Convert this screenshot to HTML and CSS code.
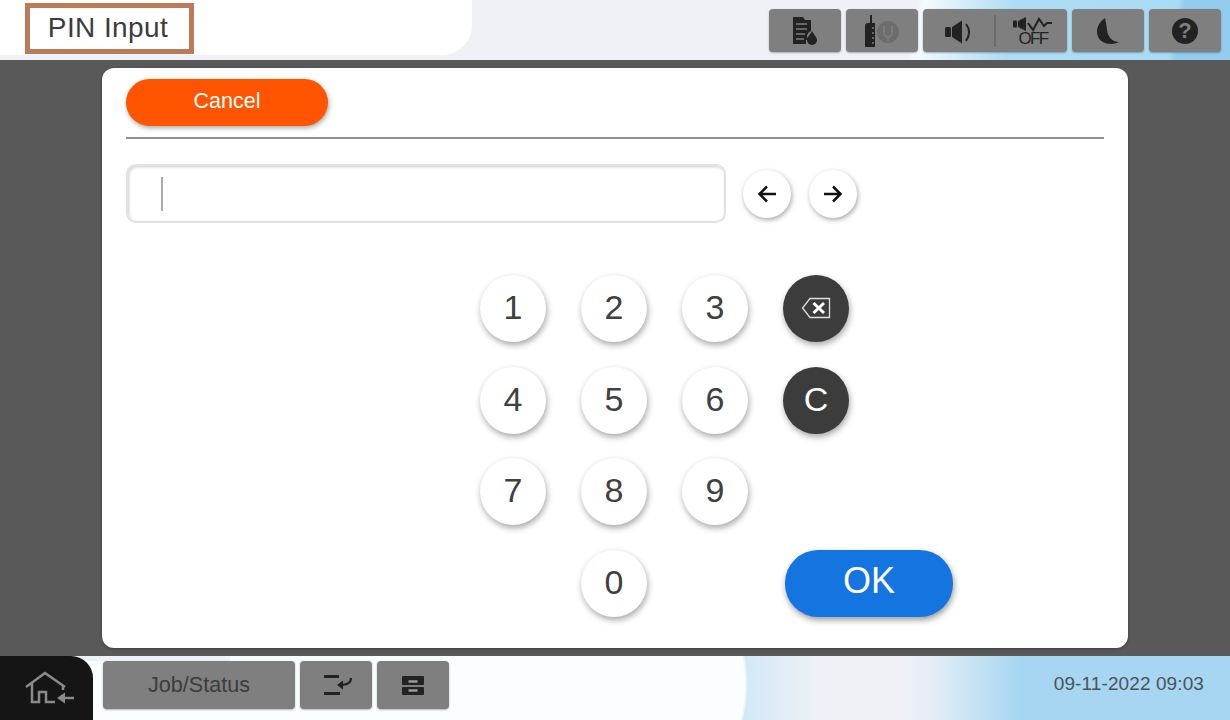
FILE: index.html
```html
<!DOCTYPE html>
<html lang="en">

<head>
    <meta charset="UTF-8">
    <meta name="viewport" content="width=device-width, initial-scale=1.0">
    <title>PIN Input</title>
    <link rel="stylesheet" href="styles.css">
</head>

<body>
    <header class="topbar">
        <div class="title-area">
            <h1 class="title">PIN Input</h1>
        </div>
        <div class="top-btns">
            <div class="tool">
                <svg width="26" height="30" viewBox="0 0 26 30">
                    <path d="M1 1h10l2 3h6v11a6 6 0 0 0-3 9h-2v4H1z" fill="#222" />
                    <path d="M4 8h11M4 13h11M4 18h9M4 23h8" stroke="#7f7f7f" stroke-width="1.6" />
                    <path d="M20 15c2 4 5 6 5 9a5 5 0 0 1-10 0c0-3 3-5 5-9z" fill="#222" />
                </svg>
            </div>
            <div class="tool">
                <svg width="36" height="34" viewBox="0 0 36 34">
                    <circle cx="24" cy="18" r="11" fill="#6d6d6d" />
                    <path d="M20 12v7a4 4 0 0 0 8 0v-7M24 23v4" fill="none" stroke="#7c7c7c" stroke-width="2" />
                    <path d="M6 1h2v8h3v24H1V12a3 3 0 0 1 3-3h2z" fill="#222" />
                    <path d="M8 14h2M8 19h2M8 24h2M8 29h2" stroke="#7f7f7f" stroke-width="1.4" />
                </svg>
            </div>
            <div class="tool tool-wide">
                <div class="tool-half">
                    <svg width="30" height="26" viewBox="0 0 30 26">
                        <rect x="1" y="9" width="6" height="10" rx="1.500" fill="#222" />
                        <path d="M8 9l10-6.500v23L8 19z" fill="#222" />
                        <path d="M22 6c4 5 4 11 0 17" fill="none" stroke="#222" stroke-width="2" />
                    </svg>
                </div>
                <span class="tool-sep"></span>
                <div class="tool-half mute">
                    <svg width="42" height="16" viewBox="0 0 42 16">
                        <rect x="2" y="4.500" width="4" height="7" rx="1" fill="#222" />
                        <path d="M7 5l8-4v14l-8-4z" fill="#222" />
                        <path d="M17 7l5 7 6-11 5 7 3-3h5" fill="none" stroke="#222" stroke-width="2" />
                    </svg>
                    <span class="off-text">OFF</span>
                </div>
            </div>
            <div class="tool">
                <svg width="24" height="28" viewBox="0 0 24 28">
                    <path d="M9 1C2 6 0 12 1.500 18 3 24 9 27 15 27c3 0 6-1 8-2-6 0-10-4-11.500-9.500C10.500 10 10 5 9 1z" fill="#222" />
                </svg>
            </div>
            <div class="tool">
                <span class="help">?</span>
            </div>
        </div>
    </header>

    <div class="backdrop">
        <main class="dialog">
            <div class="dialog-head">
                <button class="btn-cancel">Cancel</button>
            </div>
            <div class="input-row">
                <div class="pin-input"><span class="caret"></span></div>
                <button class="arrow">
                    <svg width="20" height="20" viewBox="0 0 20 20">
                        <path d="M19 10H3M10 2.500L2.500 10l7.500 7.500" fill="none" stroke="#111" stroke-width="2.500" />
                    </svg>
                </button>
                <button class="arrow">
                    <svg width="20" height="20" viewBox="0 0 20 20">
                        <path d="M1 10h16M10 2.500l7.500 7.500-7.500 7.500" fill="none" stroke="#111" stroke-width="2.500" />
                    </svg>
                </button>
            </div>
            <div class="keypad">
                <button class="key">1</button>
                <button class="key">2</button>
                <button class="key">3</button>
                <button class="key key-dark">
                    <svg width="30" height="22" viewBox="0 0 30 22">
                        <path d="M28.500 1.500H9L1.500 11 9 20.500h19.500z" fill="none" stroke="#ddd" stroke-width="1.300" />
                        <path d="M12.500 6l10.500 10M23 6L12.500 16" stroke="#fff" stroke-width="3" />
                    </svg>
                </button>
                <button class="key">4</button>
                <button class="key">5</button>
                <button class="key">6</button>
                <button class="key key-dark">C</button>
                <button class="key">7</button>
                <button class="key">8</button>
                <button class="key">9</button>
                <button class="key key-zero">0</button>
                <button class="btn-ok">OK</button>
            </div>
        </main>
    </div>

    <footer class="bottombar">
        <div class="home">
            <svg width="50" height="36" viewBox="0 0 50 36">
                <path d="M1 17L20 3l20 14M7 12v20h7V22h7v10h9M38 15v5" fill="none" stroke="#8a8a8a" stroke-width="2.500" />
                <path d="M32 28l8-5.500v11z" fill="#8a8a8a" />
                <path d="M39 28h10" stroke="#8a8a8a" stroke-width="2.500" />
            </svg>
        </div>
        <div class="job-btns">
            <div class="tool tool-job">Job/Status</div>
            <div class="tool tool-small">
                <svg class="job-icon" width="30" height="24" viewBox="0 0 30 24">
                    <path d="M1 3.500h15M1 20.500h16" stroke="#222" stroke-width="3" />
                    <path d="M28 5c0 5-4 7-11 7" fill="none" stroke="#222" stroke-width="2.200" />
                    <path d="M14 12l6-4.500v9z" fill="#222" />
                </svg>
            </div>
            <div class="tool tool-small">
                <svg width="22" height="20" viewBox="0 0 22 20">
                    <rect y="1" width="22" height="9" rx="1" fill="#222" />
                    <rect y="12" width="22" height="8" rx="1" fill="#222" />
                    <path d="M6.500 6.500h9M6.500 15.500h9" stroke="#999" stroke-width="2.500" />
                </svg>
            </div>
        </div>
        <div class="clock">09-11-2022 09:03</div>
    </footer>
</body>

</html>
```

FILE: styles.css
```css
*,
::before,
::after {
    margin: 0;
    box-sizing: border-box;
}

html,
body {
    height: 100%;
}

body {
    display: flex;
    flex-direction: column;
    height: 720px;
    overflow: hidden;
    font-family: "Liberation Sans", Arial, sans-serif;
    color: #3c3c3c;
    background: #595959;
}

button {
    font-family: inherit;
    border: 0;
    padding: 0;
    cursor: pointer;
}

/* top bar */
.topbar {
    flex: 0 0 60px;
    display: flex;
    justify-content: space-between;
    background: linear-gradient(100deg, #eff1f7 905px, #f4fbfe 910px, #aedcf5 1000px, #aadbf5 1160px, #93ccee 1168px);
}

.title-area {
    width: 472px;
    height: 55px;
    padding: 3px 0 0 25px;
    background: #fff;
    border-bottom-right-radius: 30px;
}

.title {
    width: 169px;
    height: 51px;
    padding-right: 3px;
    border: 5px solid #bb7b5b;
    font-size: 28px;
    font-weight: 400;
    line-height: 40px;
    text-align: center;
    letter-spacing: .4px;
}

.top-btns {
    display: flex;
    gap: 5px;
    padding: 9px 9px 0 0;
}

.tool {
    display: flex;
    align-items: center;
    justify-content: center;
    width: 72px;
    height: 43px;
    background: #7f7f7f;
    border-radius: 4px;
    box-shadow: 0 1px 2px rgba(0, 0, 0, .3);
}

.tool-wide {
    width: 144px;
}

.tool-half {
    flex: 1;
    display: flex;
    justify-content: center;
}

.tool-sep {
    width: 2px;
    height: 32px;
    background: #6c6c6c;
}

.mute {
    flex-direction: column;
    align-items: center;
}

.off-text {
    margin: -1px 0 0 3px;
    font-size: 17px;
    line-height: 15px;
    letter-spacing: -1.700px;
    color: #222;
}

.help {
    width: 26px;
    height: 26px;
    border-radius: 50%;
    background: #222;
    color: #7f7f7f;
    font-size: 22px;
    font-weight: 700;
    line-height: 26px;
    text-align: center;
}

/* dialog */
.backdrop {
    flex: 1;
    padding: 8px 102px;
    background: #595959;
}

.dialog {
    width: 1026px;
    height: 580px;
    padding: 11px 24px 0;
    background: #fff;
    border-radius: 12px;
    box-shadow: 0 1px 3px rgba(0, 0, 0, .3);
}

.dialog-head {
    height: 60px;
    border-bottom: 2px solid #8f8f8f;
}

.btn-cancel {
    display: block;
    width: 202px;
    height: 47px;
    padding-bottom: 2px;
    border-radius: 24px;
    background: #ff5500;
    color: #fff;
    font-size: 21.500px;
    box-shadow: 1px 2px 5px rgba(0, 0, 0, .35);
}

.input-row {
    display: flex;
    align-items: center;
    gap: 18px;
    margin-top: 25px;
}

.pin-input {
    display: flex;
    align-items: center;
    width: 600px;
    height: 59px;
    padding-left: 33px;
    margin-right: -1px;
    border: 2px solid #e2e2e2;
    border-radius: 10px;
    box-shadow: inset 1px 1px 3px rgba(0, 0, 0, .2);
}

.caret {
    width: 2px;
    height: 34px;
    background: #aaa;
}

.arrow {
    display: flex;
    align-items: center;
    justify-content: center;
    width: 48px;
    height: 48px;
    border-radius: 50%;
    background: #fff;
    box-shadow: 1px 2px 5px rgba(0, 0, 0, .35);
}

.keypad {
    display: grid;
    grid-template-columns: repeat(4, 66px);
    grid-auto-rows: 67px;
    column-gap: 35px;
    row-gap: 24.700px;
    margin: 52px 0 0 354px;
}

.key {
    display: flex;
    align-items: center;
    justify-content: center;
    width: 66px;
    height: 67px;
    padding-bottom: 2px;
    border-radius: 50%;
    background: #fff;
    color: #404040;
    font-size: 34px;
    box-shadow: 1px 3px 6px rgba(0, 0, 0, .35);
}

.key-dark {
    background: #3c3c3c;
    color: #fff;
}

.key-zero {
    grid-column: 2;
    grid-row: 4;
}

.btn-ok {
    grid-column: 4;
    grid-row: 4;
    width: 168px;
    margin-left: 2px;
    padding-bottom: 6px;
    border-radius: 33px;
    background: #1474e0;
    color: #fff;
    font-size: 36px;
    box-shadow: 1px 3px 6px rgba(0, 0, 0, .4);
}

/* bottom bar */
.bottombar {
    flex: 0 0 64px;
    display: flex;
    background:
        linear-gradient(180deg, #eef1f8 5px, transparent 5px) 0 0 / 230px 100% no-repeat,
        radial-gradient(ellipse 655px 300px at 93px 28px, #fbfeff 0, #fbfeff 99.500%, transparent 100%),
        linear-gradient(90deg, #d3e8f6 745px, #eff1f7 820px, #eff1f7 900px, #e6eef7 930px, #a6d6f1 1020px);
    border-bottom: 1px solid #a9b4bd;
}

.home {
    display: flex;
    align-items: center;
    width: 93px;
    height: 64px;
    padding-left: 25px;
    background: #151515;
    border-top-right-radius: 22px;
}

.job-btns {
    display: flex;
    gap: 5px;
    padding: 5px 0 0 10px;
}

.tool-job {
    width: 192px;
    height: 48px;
    font-size: 21.600px;
}

.tool-small {
    height: 48px;
}

.job-icon {
    margin-left: 4px;
}

.clock {
    margin-left: auto;
    padding: 17px 26px 0 0;
    font-size: 19px;
    letter-spacing: .1px;
    color: #4c5358;
}
```
